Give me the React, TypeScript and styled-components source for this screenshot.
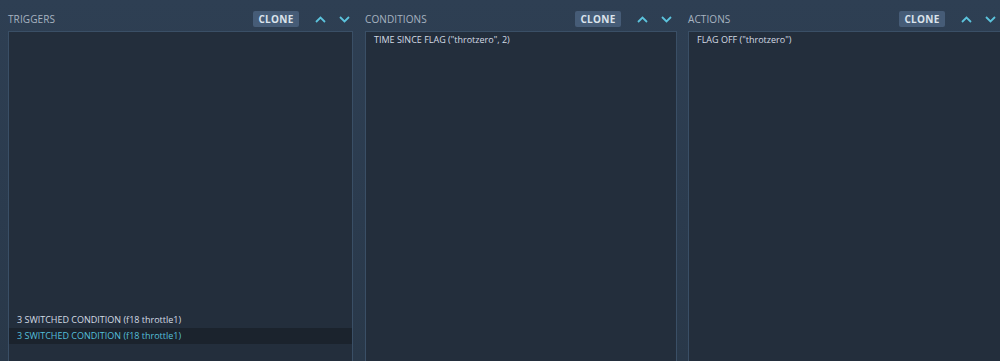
import React from 'react';
import styled, { createGlobalStyle } from 'styled-components';

const GlobalStyle = createGlobalStyle`
  html, body {
    margin: 0;
    padding: 0;
    background: #2b3b4e;
  }
  body {
    font-family: "Open Sans", "DejaVu Sans", sans-serif;
    overflow: hidden;
  }
`;

const Page = styled.div`
  display: flex;
  height: 361px;
  padding-left: 8px;
  box-sizing: border-box;
  background: linear-gradient(180deg, #2e3f53 0%, #2b3b4e 60%, #293849 100%);
  overflow: hidden;
`;

const Column = styled.div<{ $width: number; $offset: number }>`
  display: flex;
  flex-direction: column;
  width: ${p => p.$width}px;
  margin-left: ${p => p.$offset}px;
  flex-shrink: 0;
`;

const Header = styled.div`
  display: flex;
  align-items: center;
  height: 31px;
  padding-top: 7px;
  box-sizing: border-box;
`;

const Title = styled.div`
  flex: 1;
  font-size: 10px;
  color: #a7b3c0;
  letter-spacing: 0.1px;
  text-transform: uppercase;
`;

const CloneButton = styled.button`
  height: 16px;
  width: 46px;
  padding: 0;
  border: none;
  border-radius: 2px;
  background: #465c77;
  color: #dbe3ec;
  font-family: "Open Sans", "DejaVu Sans", sans-serif;
  font-weight: 700;
  font-size: 10px;
  letter-spacing: 0.3px;
  cursor: pointer;
`;

const ArrowButton = styled.button<{ $gap: number }>`
  display: flex;
  align-items: center;
  justify-content: center;
  width: 14px;
  height: 16px;
  padding: 0;
  margin-left: ${p => p.$gap}px;
  border: none;
  background: transparent;
  cursor: pointer;
`;

const ListBox = styled.div<{ $bottom?: boolean }>`
  flex: 1;
  display: flex;
  flex-direction: column;
  justify-content: ${p => (p.$bottom ? 'flex-end' : 'flex-start')};
  padding: ${p => (p.$bottom ? '0 0 17px' : '0')};
  background: #232e3c;
  border: 1px solid #3a4f66;
  border-bottom: none;
`;

const Row = styled.div<{ $selected?: boolean }>`
  height: 16px;
  line-height: 16px;
  padding-left: 8px;
  font-size: 9px;
  white-space: nowrap;
  color: ${p => (p.$selected ? '#55bfd9' : '#d3dbe4')};
  background: ${p => (p.$selected ? '#1b232d' : 'transparent')};
`;

const Chevron = ({ up }: { up?: boolean }) => (
  <svg width="11" height="7" viewBox="0 0 11 7">
    <path
      d={up ? 'M1 6 L5.5 1.5 L10 6' : 'M1 1 L5.5 5.5 L10 1'}
      fill="none"
      stroke="#5cc3dc"
      strokeWidth="1.8"
    />
  </svg>
);

type PanelProps = {
  title: string;
  width: number;
  offset: number;
  items: string[];
  selected?: number;
  bottom?: boolean;
  trail: number;
};

const Panel = ({ title, width, offset, items, selected, bottom, trail }: PanelProps) => (
  <Column $width={width} $offset={offset}>
    <Header>
      <Title>{title}</Title>
      <CloneButton>CLONE</CloneButton>
      <ArrowButton $gap={14}>
        <Chevron up />
      </ArrowButton>
      <ArrowButton $gap={10}>
        <Chevron />
      </ArrowButton>
      <div style={{ width: trail }} />
    </Header>
    <ListBox $bottom={bottom}>
      {items.map((item, i) => (
        <Row key={i} $selected={i === selected}>
          {item}
        </Row>
      ))}
    </ListBox>
  </Column>
);

const App = () => (
  <>
    <GlobalStyle />
    <Page>
      <Panel
        title="Triggers"
        width={345}
        offset={0}
        trail={2}
        items={['3 SWITCHED CONDITION (f18 throttle1)', '3 SWITCHED CONDITION (f18 throttle1)']}
        selected={1}
        bottom
      />
      <Panel
        title="Conditions"
        width={312}
        offset={12}
        trail={4}
        items={['TIME SINCE FLAG ("throtzero", 2)']}
      />
      <Panel
        title="Actions"
        width={313}
        offset={11}
        trail={4}
        items={['FLAG OFF ("throtzero")']}
      />
    </Page>
  </>
);

export default App;
